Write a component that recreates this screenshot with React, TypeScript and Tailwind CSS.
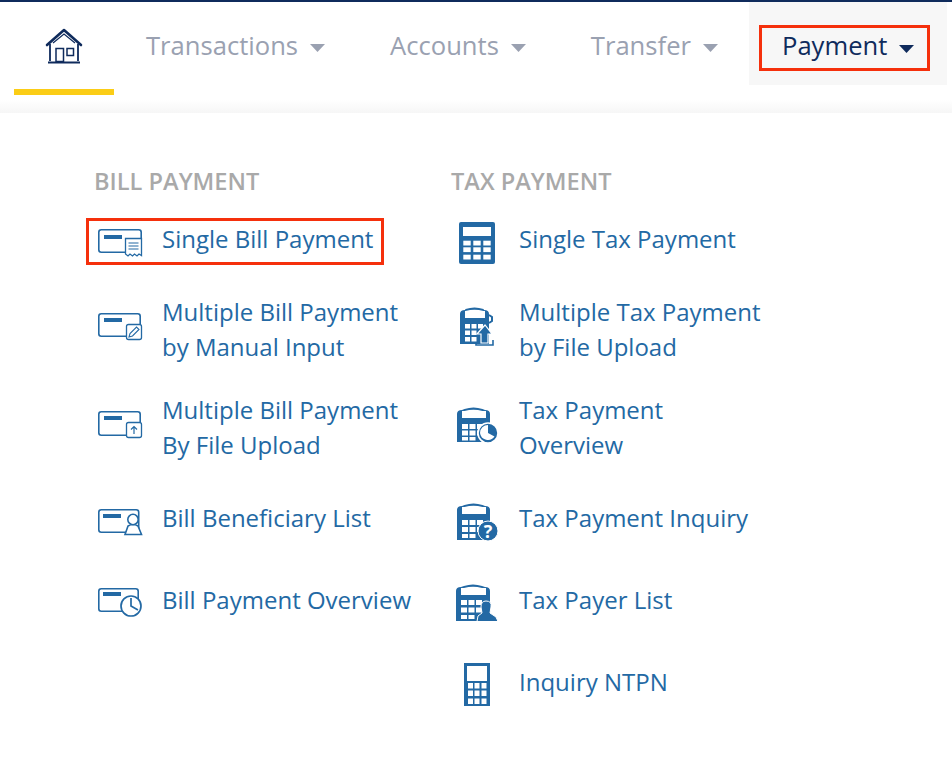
const BLUE = "#2369a4";

function Svg({ children }: { children: React.ReactNode }) {
  return (
    <svg width="52" height="56" viewBox="0 0 52 56" fill="none" className="shrink-0 block">
      {children}
    </svg>
  );
}

function Card({ x2, y1, y2, barY, barX = 8 }: { x2: number; y1: number; y2: number; barY: number; barX?: number }) {
  return (
    <>
      <rect x="2.8" y={y1 + 0.8} width={x2 - 3.6} height={y2 - y1 - 1.6} rx="2.5" stroke={BLUE} strokeWidth="1.6" />
      <rect x={barX} y={barY} width="18" height="4" fill={BLUE} />
    </>
  );
}

function Keys({ xs, ys, w, h, fill = "#fff" }: { xs: number[]; ys: number[]; w: number; h: number; fill?: string }) {
  return (
    <>
      {ys.map((y) => xs.map((x) => <rect key={`${x}-${y}`} x={x} y={y} width={w} height={h} fill={fill} />))}
    </>
  );
}

function ClipBody({ x1, x2, y1, y2 }: { x1: number; x2: number; y1: number; y2: number }) {
  const mid = (x1 + x2) / 2;
  return (
    <>
      <path
        d={`M${x1} ${y1 + 7} Q${x1} ${y1 + 3} ${x1 + 5} ${y1 + 3} L${mid - 9} ${y1 + 2} Q${mid} ${y1 - 1} ${mid + 9} ${y1 + 2} L${x2 - 5} ${y1 + 3} Q${x2} ${y1 + 3} ${x2} ${y1 + 7} L${x2} ${y2} L${x1} ${y2} Z`}
        fill={BLUE}
      />
      <path
        d={`M${x1 + 5} ${y1 + 4} L${mid - 9} ${y1 + 4} Q${mid} ${y1 + 1.5} ${mid + 9} ${y1 + 4} L${x2 - 4} ${y1 + 4} L${x2 - 4} ${y1 + 11} L${x1 + 5} ${y1 + 11} Z`}
        fill="#fff"
      />
    </>
  );
}

const icons: Record<string, React.ReactNode> = {
  single: (
    <Svg>
      <Card x2={46} y1={15} y2={39} barY={21} />
      <path d="M29.5 24.5H45.5V41.5L43 40L41 42L38.5 40L36.5 42L34 40L32 42L29.5 40Z" fill="#fff" stroke={BLUE} strokeWidth="1.3" />
      <path d="M32.5 29H42.5M32.5 32H42.5M32.5 35H42.5" stroke={BLUE} strokeWidth="1.2" />
    </Svg>
  ),
  manual: (
    <Svg>
      <Card x2={45} y1={17} y2={41} barY={22} />
      <rect x="30.5" y="28.5" width="15" height="15" rx="2" fill="#fff" stroke={BLUE} strokeWidth="1.3" />
      <path d="M33 41L34 37.5L40.5 31L43 33.5L36.5 40Z" stroke={BLUE} strokeWidth="1.1" fill="#fff" />
    </Svg>
  ),
  upload: (
    <Svg>
      <Card x2={45} y1={17} y2={42} barY={22} />
      <rect x="30.5" y="28.5" width="15" height="15" rx="2" fill="#fff" stroke={BLUE} strokeWidth="1.3" />
      <path d="M38 40V32.5M35 35.5L38 32.5L41 35.5" stroke={BLUE} strokeWidth="1.2" />
    </Svg>
  ),
  beneficiary: (
    <Svg>
      <Card x2={43.5} y1={17} y2={41} barY={22} barX={7} />
      <path d="M29 42.5L32 34Q37 31 42 34L45.5 42.5Z" fill="#fff" stroke={BLUE} strokeWidth="1.6" />
      <circle cx="37" cy="27.5" r="5.2" fill="#fff" stroke={BLUE} strokeWidth="1.6" />
    </Svg>
  ),
  overview: (
    <Svg>
      <Card x2={43} y1={14} y2={38} barY={18} barX={7} />
      <circle cx="35" cy="32" r="10" fill="#fff" stroke={BLUE} strokeWidth="1.7" />
      <path d="M35 24V32L42 36" stroke={BLUE} strokeWidth="1.7" />
    </Svg>
  ),
  tax1: (
    <Svg>
      <rect x="8" y="8" width="36" height="42" rx="2" fill={BLUE} />
      <rect x="12" y="13" width="28" height="9" fill="#fff" />
      <Keys xs={[12.3, 22.3, 32.3]} ys={[26.7, 33.3, 40.7]} w={7.4} h={4.8} />
    </Svg>
  ),
  tax2: (
    <Svg>
      <ClipBody x1={9} x2={38} y1={11} y2={48} />
      <Keys xs={[14, 20.5]} ys={[28, 34.5, 41]} w={5} h={4.5} />
      <Keys xs={[27]} ys={[28]} w={5} h={4.5} />
      <path d="M26 38L34 29L41 38H37V47H30V38Z" fill={BLUE} stroke="#fff" strokeWidth="1.2" />
      <path d="M25 47V49H42V44" stroke={BLUE} strokeWidth="1.6" />
      <path d="M38 19L41 21V25L38 27" stroke={BLUE} strokeWidth="2" />
    </Svg>
  ),
  tax3: (
    <Svg>
      <ClipBody x1={6} x2={39} y1={13} y2={48} />
      <Keys xs={[11, 18.5, 26]} ys={[30, 36.5]} w={6} h={5} />
      <Keys xs={[11, 18.5]} ys={[43]} w={6} h={3.5} />
      <circle cx="37" cy="39" r="10" fill={BLUE} stroke="#fff" strokeWidth="1.6" />
      <path d="M37 31V39L43.5 42.5A8 8 0 0 1 29 39A8 8 0 0 1 37 31Z" fill="#fff" />
    </Svg>
  ),
  tax4: (
    <Svg>
      <ClipBody x1={6} x2={39} y1={11} y2={48} />
      <Keys xs={[11, 18.5, 26]} ys={[28, 35]} w={6} h={5} />
      <Keys xs={[11, 18.5]} ys={[42]} w={6} h={4} />
      <circle cx="37" cy="39" r="10" fill={BLUE} stroke="#fff" strokeWidth="1" />
      <text x="37" y="46" textAnchor="middle" fontSize="18" fontWeight="700" fill="#fff" fontFamily="'Open Sans', sans-serif">?</text>
    </Svg>
  ),
  tax5: (
    <Svg>
      <ClipBody x1={5} x2={39} y1={10} y2={47} />
      <Keys xs={[10, 17.5, 25]} ys={[26, 33.5]} w={6} h={5} />
      <Keys xs={[10, 17.5]} ys={[41]} w={6} h={4} />
      <path d="M26 47.5L27 42L31 39L30 33Q30 27 35 27Q41 27 40 33L39 39L45 43L47 47.5Z" fill={BLUE} stroke="#fff" strokeWidth="1" />
    </Svg>
  ),
  tax6: (
    <Svg>
      <rect x="14.5" y="8.5" width="23" height="40" stroke={BLUE} strokeWidth="3" />
      <rect x="14" y="25" width="24" height="24" fill={BLUE} />
      <Keys xs={[17, 23.5, 30.5]} ys={[27, 34.5, 42.5]} w={5} h={5.5} />
    </Svg>
  ),
};

function Item({ icon, lines, mark, col }: { icon: string; lines: string[]; mark?: boolean; col: string }) {
  return (
    <div className="relative flex items-start min-h-[53px]">
      {mark && <div className="absolute left-[-9px] top-[5px] w-[298px] h-[47px] border-[3px] border-[#f5300c]" />}
      <div className={`${col} h-[53px] shrink-0 pt-[1px]`}>{icons[icon]}</div>
      <div className="min-h-[53px] flex items-center">
        <span className="text-[24px] leading-[34.6px] text-[#2369a4] whitespace-pre-line">{lines.join("\n")}</span>
      </div>
    </div>
  );
}

function Caret({ color }: { color: string }) {
  return (
    <svg width="15" height="8" viewBox="0 0 15 8" className="ml-[12px] mt-[5px] shrink-0">
      <path d="M0 0H15L7.5 8Z" fill={color} />
    </svg>
  );
}

function Tab({ label, extra }: { label: string; extra: string }) {
  return (
    <div className={`${extra} h-[89px] px-[32px] flex items-center pb-[2px] shrink-0`}>
      <span className="text-[25.6px] text-[#9aa1b1] leading-none">{label}</span>
      <Caret color="#9aa1b1" />
    </div>
  );
}

export default function App() {
  return (
    <div className="w-[952px] h-[764px] bg-white overflow-hidden" style={{ fontFamily: "'Open Sans', sans-serif" }}>
      <header className="border-t-2 border-[#0f2b5c] h-[113px] bg-gradient-to-b from-white from-[88%] to-[#f6f6f6]">
        <nav className="flex items-start pl-[14px]">
          <div className="w-[100px] h-[93px] shrink-0 border-b-[6px] border-[#fbcd16] flex justify-center pt-[26px]">
            <svg width="38" height="36" viewBox="0 0 38 36" fill="none" stroke="#0f2b5c">
              <path d="M2 17L19 2L36 17" strokeWidth="2.6" strokeLinejoin="round" strokeLinecap="round" />
              <path d="M8 15L19 6L30 15" strokeWidth="1.2" />
              <path d="M5 16V33M33 16V33" strokeWidth="1.8" />
              <path d="M3 34.5H35" strokeWidth="2" />
              <rect x="11" y="20.5" width="7.5" height="13" strokeWidth="1.5" />
              <rect x="22" y="20.5" width="6.5" height="7" strokeWidth="1.5" />
            </svg>
          </div>
          <Tab label="Transactions" extra="ml-0" />
          <Tab label="Accounts" extra="ml-[1px]" />
          <Tab label="Transfer" extra="ml-[1px] -mr-[6px]" />
          <div className="h-[83px] w-[198px] shrink-0 bg-[#f7f7f7] pl-[10px] pt-[23px] ml-auto mr-[5px]">
            <div className="w-[171px] h-[46px] border-[3px] border-[#f5300c] flex items-center pl-[20px] pb-[4px]">
              <span className="text-[25.6px] text-[#0f2b5c] leading-none">Payment</span>
              <Caret color="#0f2b5c" />
            </div>
          </div>
        </nav>
      </header>

      <main className="flex pt-[52px] pl-[94px]">
        <section className="w-[357px]">
          <h2 className="text-[23.6px] font-semibold leading-[33px] text-[#a9a9a9] mb-[15px]">BILL PAYMENT</h2>
          <div className="flex flex-col gap-[29px] ml-[1px]">
            <Item icon="single" lines={["Single Bill Payment"]} mark col="w-[67px] pl-[1px]" />
            <Item icon="manual" lines={["Multiple Bill Payment", "by Manual Input"]} col="w-[67px] pl-[1px]" />
            <Item icon="upload" lines={["Multiple Bill Payment", "By File Upload"]} col="w-[67px] pl-[1px]" />
            <Item icon="beneficiary" lines={["Bill Beneficiary List"]} col="w-[67px] pl-[1px]" />
            <Item icon="overview" lines={["Bill Payment Overview"]} col="w-[67px] pl-[1px]" />
          </div>
        </section>
        <section>
          <h2 className="text-[23.6px] font-semibold leading-[33px] text-[#a9a9a9] mb-[15px]">TAX PAYMENT</h2>
          <div className="flex flex-col gap-[29px]">
            <Item icon="tax1" lines={["Single Tax Payment"]} col="w-[68px]" />
            <Item icon="tax2" lines={["Multiple Tax Payment", "by File Upload"]} col="w-[68px]" />
            <Item icon="tax3" lines={["Tax Payment", "Overview"]} col="w-[68px]" />
            <Item icon="tax4" lines={["Tax Payment Inquiry"]} col="w-[68px]" />
            <Item icon="tax5" lines={["Tax Payer List"]} col="w-[68px]" />
            <Item icon="tax6" lines={["Inquiry NTPN"]} col="w-[68px]" />
          </div>
        </section>
      </main>
    </div>
  );
}
